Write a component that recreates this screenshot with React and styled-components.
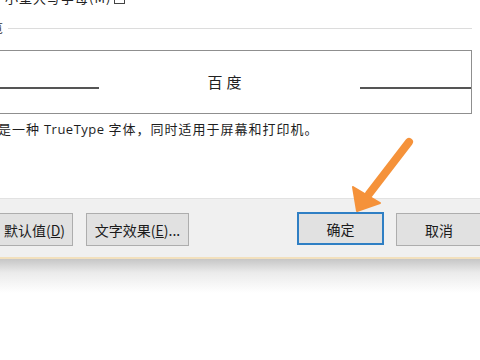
import React from "react";
import styled, { createGlobalStyle } from "styled-components";

const Global = createGlobalStyle`
  html, body { margin: 0; padding: 0; background: #ffffff; }
  body { width: 480px; height: 360px; overflow: hidden; font-family: "Noto Sans CJK SC", "Noto Sans", sans-serif; color: #1b1b1b; }
`;

const Page = styled.div`
  position: relative;
  width: 480px;
  height: 360px;
  overflow: hidden;
  display: flex;
  flex-direction: column;
  background: #fff;
`;

const TopClip = styled.div`
  height: 5px;
  overflow: hidden;
  display: flex;
  align-items: flex-end;
  padding-left: 5px;
  gap: 3px;
`;

const TopText = styled.div`
  font-size: 13px;
  line-height: 13px;
  margin-bottom: 1px;
  white-space: nowrap;
  color: #222;
  letter-spacing: 1px;
`;

const TopBox = styled.div`
  width: 9px;
  height: 12px;
  border: 1px solid #444;
  margin-bottom: 1px;
  flex: 0 0 auto;
`;

const SectionRow = styled.div`
  display: flex;
  align-items: center;
  height: 12px;
  margin-top: 17px;
`;

const SectionLabel = styled.span`
  font-size: 12px;
  margin-left: -9px;
  color: #333;
  line-height: 12px;
`;

const SectionLine = styled.div`
  flex: 1;
  height: 1px;
  background: #dcdcdc;
  margin-left: 5px;
  margin-right: 8px;
`;

const Preview = styled.div`
  margin-top: 16px;
  margin-left: -2px;
  width: 474px;
  height: 64px;
  border: 1px solid #8f8f8f;
  box-sizing: border-box;
  display: flex;
  align-items: center;
`;

const Rule = styled.div`
  width: ${(p) => p.$w}px;
  height: 2px;
  background: #555;
  margin-top: 11px;
`;

const PreviewText = styled.div`
  flex: 1;
  text-align: center;
  font-size: 15px;
  letter-spacing: 4px;
  padding-right: 6px;
  margin-top: -2px;
  color: #222;
`;

const Desc = styled.div`
  margin-top: 6px;
  margin-left: -2px;
  font-size: 13px;
  letter-spacing: 1px;
  line-height: 17px;
  color: #1e1e1e;
  white-space: nowrap;
  & span { font-family: "Open Sans", "Noto Sans", sans-serif; letter-spacing: 0.5px; }
`;

const Spacer = styled.div`
  flex: 0 0 60px;
`;

const Footer = styled.div`
  background: #f0f0f0;
  border-top: 1px solid #e2e2e2;
  border-bottom: 2px solid #f2e0bd;
  display: flex;
  align-items: flex-start;
  padding-top: 14px;
  box-sizing: border-box;
  height: 61px;
`;

const Button = styled.div`
  flex: 0 0 ${(p) => p.$w}px;
  margin-left: ${(p) => p.$ml}px;
  height: 33px;
  box-sizing: border-box;
  background: #e1e1e1;
  border: ${(p) => (p.$primary ? "2px solid #2f7fc4" : "1px solid #adadad")};
  margin-top: ${(p) => (p.$primary ? -1 : 0)}px;
  display: flex;
  align-items: center;
  justify-content: center;
  font-size: 14px;
  color: #1b1b1b;
  white-space: nowrap;
  padding-left: ${(p) => p.$pl || 0}px;
`;

const Shadow = styled.div`
  height: 34px;
  background: linear-gradient(#c6c6c6, #ebebeb 40%, #ffffff);
`;

const Arrow = styled.svg`
  position: absolute;
  left: 0;
  top: 0;
  pointer-events: none;
`;

export default function App() {
  return (
    <Page>
      <Global />
      <TopClip>
        <TopText>小型大写字母(M)</TopText>
        <TopBox />
      </TopClip>
      <SectionRow>
        <SectionLabel>览</SectionLabel>
        <SectionLine />
      </SectionRow>
      <Preview>
        <Rule $w={100} />
        <PreviewText>百度</PreviewText>
        <Rule $w={111} />
      </Preview>
      <Desc>
        是一种 <span>TrueType</span> 字体，同时适用于屏幕和打印机。
      </Desc>
      <Spacer />
      <Footer>
        <Button $w={101} $ml={-28} $pl={24}>默认值(<u>D</u>)</Button>
        <Button $w={103} $ml={13}>文字效果(<u>E</u>)...</Button>
        <Button $w={87} $ml={108} $primary>确定</Button>
        <Button $w={86} $ml={12}>取消</Button>
      </Footer>
      <Shadow />
      <Arrow width="480" height="360" viewBox="0 0 480 360">
        <line x1="409" y1="142" x2="369" y2="194" stroke="#f5923a" strokeWidth="8" strokeLinecap="round" />
        <polygon points="357,211 353,187 380,203" fill="#f5923a" stroke="#f5923a" strokeWidth="2" strokeLinejoin="round" />
      </Arrow>
    </Page>
  );
}
